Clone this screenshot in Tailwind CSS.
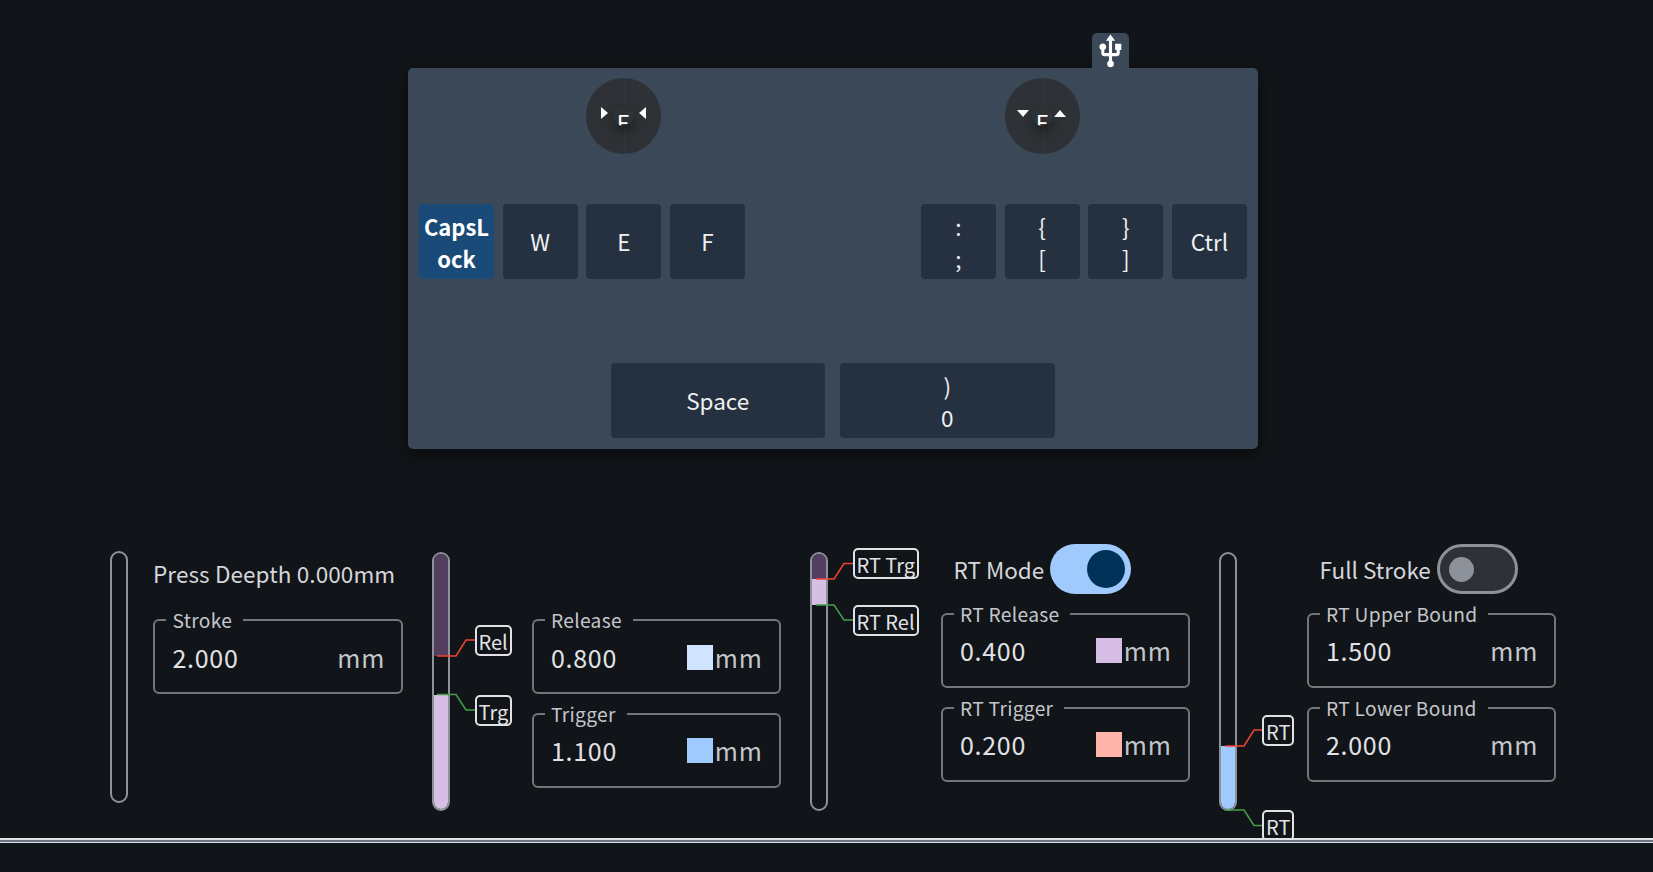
<!DOCTYPE html>
<html lang="en">
<head>
  <meta charset="UTF-8" />
  <meta name="viewport" content="width=device-width, initial-scale=1.0" />
  <title>Keyboard Settings</title>
  <script src="https://cdn.jsdelivr.net/npm/@tailwindcss/browser@4"></script>
</head>
<body class="bg-[#111418] h-[872px] overflow-hidden font-['Noto_Sans_CJK_SC',sans-serif] text-[#e2e2e6]">

  <!-- Keyboard -->
  <div class="relative w-[850px] h-[381px] mt-[68px] ml-[408px] bg-[#3b4858] rounded-[5px] shadow-[0_4px_16px_rgba(0,0,0,0.45)] pt-[10px] text-[22.5px] text-[#f0f0f3]">
    <div class="absolute -top-[35px] right-[129px] w-[37px] h-[36px] bg-[#3b4858] rounded-t-[5px]">
      <svg viewBox="0 0 24 24" class="w-[37px] h-[37px] fill-white"><path d="M15,7V11H16V13H13V5H15L12,1L9,5H11V13H8V10.93C8.7,10.56 9.2,9.85 9.2,9C9.2,7.78 8.21,6.8 7,6.8C5.78,6.8 4.8,7.78 4.8,9C4.8,9.85 5.3,10.56 6,10.93V13A2,2 0 0,0 8,15H11V18.05C10.29,18.41 9.8,19.15 9.8,20A2.2,2.2 0 0,0 12,22.2A2.2,2.2 0 0,0 14.2,20C14.2,19.15 13.71,18.41 13,18.05V15H16A2,2 0 0,0 18,13V11H19V7H15Z"/></svg>
    </div>

    <!-- Joysticks -->
    <div class="flex h-[76px] pl-[178px] gap-[344px]">
      <div class="relative w-[75px] h-[76px] rounded-full bg-[#2e3135]">
        <div class="absolute left-1/2 top-0 w-px h-full bg-[#34373b]"></div>
        <div class="absolute left-[15px] top-[29px] w-0 h-0 border-y-[6.5px] border-y-transparent border-l-[7px] border-l-white"></div>
        <div class="absolute left-[53px] top-[29px] w-0 h-0 border-y-[6.5px] border-y-transparent border-r-[7px] border-r-white"></div>
        <div class="absolute left-[27px] top-[28px] w-[21px] h-[20px] rounded-full bg-[#2e3135] shadow-[0_6px_12px_rgba(0,0,0,0.35)] overflow-hidden text-center text-[22.5px] leading-[33px] text-white">E</div>
      </div>
      <div class="relative w-[75px] h-[76px] rounded-full bg-[#2e3135]">
        <div class="absolute left-1/2 top-0 w-px h-full bg-[#34373b]"></div>
        <div class="absolute left-[12px] top-[32px] w-0 h-0 border-x-[6.5px] border-x-transparent border-t-[7px] border-t-white"></div>
        <div class="absolute left-[49px] top-[32px] w-0 h-0 border-x-[6.5px] border-x-transparent border-b-[7px] border-b-white"></div>
        <div class="absolute left-[27px] top-[28px] w-[21px] h-[20px] rounded-full bg-[#2e3135] shadow-[0_6px_12px_rgba(0,0,0,0.35)] overflow-hidden text-center text-[22.5px] leading-[33px] text-white">E</div>
      </div>
    </div>

    <!-- Main keys -->
    <div class="flex mt-[50px] pl-[11px] pr-[11px] justify-between">
      <div class="flex gap-[8.7px]">
        <div class="w-[75px] h-[75px] rounded-[4px] bg-[#1a4b78] flex items-center justify-center text-center text-[22px] font-bold break-all leading-[32px] text-white">CapsLock</div>
        <div class="w-[75px] h-[75px] rounded-[4px] bg-[#253040] flex items-center justify-center">W</div>
        <div class="w-[75px] h-[75px] rounded-[4px] bg-[#253040] flex items-center justify-center">E</div>
        <div class="w-[75px] h-[75px] rounded-[4px] bg-[#253040] flex items-center justify-center">F</div>
      </div>
      <div class="flex gap-[8.7px]">
        <div class="w-[75px] h-[75px] rounded-[4px] bg-[#253040] flex flex-col items-center justify-center leading-[32px]"><span>:</span><span>;</span></div>
        <div class="w-[75px] h-[75px] rounded-[4px] bg-[#253040] flex flex-col items-center justify-center leading-[32px]"><span>{</span><span>[</span></div>
        <div class="w-[75px] h-[75px] rounded-[4px] bg-[#253040] flex flex-col items-center justify-center leading-[32px]"><span>}</span><span>]</span></div>
        <div class="w-[75px] h-[75px] rounded-[4px] bg-[#253040] flex items-center justify-center">Ctrl</div>
      </div>
    </div>

    <!-- Thumb keys -->
    <div class="flex mt-[84px] pl-[202.5px] gap-[15px]">
      <div class="w-[214.5px] h-[75px] rounded-[4px] bg-[#253040] flex items-center justify-center">Space</div>
      <div class="w-[214.5px] h-[75px] rounded-[4px] bg-[#253040] flex flex-col items-center justify-center leading-[32px]"><span>)</span><span>0</span></div>
    </div>
  </div>

  <!-- Settings -->
  <div class="flex items-start h-[294px] mt-[95px] pl-[109.5px]">

    <!-- Press depth -->
    <div class="w-[18px] h-[252px] mt-[7px] rounded-full border-2 border-[#8d9199]"></div>
    <div class="w-[249.5px] ml-[25.5px]">
      <div class="h-[30px] mt-[14px] mb-[31px] text-[22.5px] leading-[30px] tracking-[0.1px] whitespace-nowrap text-[#d5d6da]">Press Deepth 0.000mm</div>
      <div class="relative h-[75px] rounded-[6px] border-2 border-[#73767b] flex items-center justify-between pl-[17.5px] pr-[15.5px] pt-[2px] text-[25px] tracking-[0.7px]">
        <span class="absolute -top-[13px] left-[11px] bg-[#111418] pl-[6.5px] pr-[11px] text-[19.2px] leading-[24px] tracking-[0.3px] text-[#c4c6cc]">Stroke</span>
        <span>2.000</span><span class="text-[#c4c6cc]">mm</span>
      </div>
    </div>

    <!-- Release / trigger -->
    <div class="relative w-[100px] h-[270px] ml-[29px] mt-[8px]">
      <div class="w-[18px] h-[259px] rounded-full border-2 border-[#8d9199] overflow-hidden flex flex-col">
        <div class="h-[102px] bg-[#523f5f]"></div>
        <div class="h-[39px]"></div>
        <div class="flex-1 bg-[#d6bee4]"></div>
      </div>
      <svg class="absolute left-0 top-0 w-[100px] h-[180px] fill-none stroke-[1.5]" viewBox="0 0 100 180">
        <polyline class="stroke-[#f44336]" points="5,104 24,104 34,88 43,88" />
        <polyline class="stroke-[#43a047]" points="5,142.5 24,142.5 34,158 43,158" />
      </svg>
      <div class="absolute left-[43px] top-[73px] px-[2px] h-[31px] rounded-[5px] border-2 border-[#e2e2e6] bg-[#111418] text-[20px] leading-[29px]">Rel</div>
      <div class="absolute left-[43px] top-[143px] px-[2px] h-[31px] rounded-[5px] border-2 border-[#e2e2e6] bg-[#111418] text-[20px] leading-[29px]">Trg</div>
    </div>
    <div class="w-[249.5px] flex flex-col gap-[19px] mt-[75px]">
      <div class="relative h-[75px] rounded-[6px] border-2 border-[#73767b] flex items-center justify-between pl-[17.5px] pr-[16.5px] pt-[2px] text-[25px] tracking-[0.7px]">
        <span class="absolute -top-[13px] left-[11px] bg-[#111418] pl-[6.5px] pr-[11px] text-[19.2px] leading-[24px] tracking-[0.3px] text-[#c4c6cc]">Release</span>
        <span>0.800</span>
        <span class="flex items-center gap-[2px] text-[#c4c6cc]"><span class="w-[25.5px] h-[25.5px] bg-[#d0e4ff]"></span>mm</span>
      </div>
      <div class="relative h-[75px] rounded-[6px] border-2 border-[#73767b] flex items-center justify-between pl-[17.5px] pr-[16.5px] text-[25px] tracking-[0.7px]">
        <span class="absolute -top-[13px] left-[11px] bg-[#111418] pl-[6.5px] pr-[11px] text-[19.2px] leading-[24px] tracking-[0.3px] text-[#c4c6cc]">Trigger</span>
        <span>1.100</span>
        <span class="flex items-center gap-[2px] text-[#c4c6cc]"><span class="w-[25.5px] h-[25.5px] bg-[#a0cafd]"></span>mm</span>
      </div>
    </div>

    <!-- Rapid trigger travel -->
    <div class="relative w-[131px] h-[270px] ml-[28.5px] mt-[8px]">
      <div class="w-[18px] h-[259px] rounded-full border-2 border-[#8d9199] overflow-hidden flex flex-col">
        <div class="h-[25px] bg-[#523f5f]"></div>
        <div class="h-[26px] bg-[#d6bee4]"></div>
      </div>
      <svg class="absolute left-0 top-0 w-[60px] h-[90px] fill-none stroke-[1.5]" viewBox="0 0 60 90">
        <polyline class="stroke-[#f44336]" points="6,27 24,27 34,11.5 43,11.5" />
        <polyline class="stroke-[#43a047]" points="6,53 24,53 34,68 43,68" />
      </svg>
      <div class="absolute left-[43px] -top-[4px] px-[2px] h-[31px] rounded-[5px] border-2 border-[#e2e2e6] bg-[#111418] text-[20px] leading-[29px] whitespace-nowrap">RT Trg</div>
      <div class="absolute left-[43px] top-[53px] px-[2px] h-[31px] rounded-[5px] border-2 border-[#e2e2e6] bg-[#111418] text-[20px] leading-[29px] whitespace-nowrap">RT Rel</div>
    </div>
    <div class="w-[249.5px]">
      <div class="flex items-center h-[50px] pl-[13px] mb-[19px] gap-[6px] text-[22.5px] text-[#d5d6da]">
        <span class="pt-[2px]">RT Mode</span>
        <div class="w-[81px] h-[50px] rounded-full bg-[#a0cafd] flex items-center justify-end pr-[6px]">
          <div class="w-[38px] h-[38px] rounded-full bg-[#003258]"></div>
        </div>
      </div>
      <div class="flex flex-col gap-[19px]">
        <div class="relative h-[75px] rounded-[6px] border-2 border-[#73767b] flex items-center justify-between pl-[17.5px] pr-[16.5px] text-[25px] tracking-[0.7px]">
          <span class="absolute -top-[13px] left-[11px] bg-[#111418] pl-[6.5px] pr-[11px] text-[19.2px] leading-[24px] tracking-[0.3px] text-[#c4c6cc]">RT Release</span>
          <span>0.400</span>
          <span class="flex items-center gap-[2px] text-[#c4c6cc]"><span class="w-[25.5px] h-[25.5px] bg-[#d6bee4]"></span>mm</span>
        </div>
        <div class="relative h-[75px] rounded-[6px] border-2 border-[#73767b] flex items-center justify-between pl-[17.5px] pr-[16.5px] text-[25px] tracking-[0.7px]">
          <span class="absolute -top-[13px] left-[11px] bg-[#111418] pl-[6.5px] pr-[11px] text-[19.2px] leading-[24px] tracking-[0.3px] text-[#c4c6cc]">RT Trigger</span>
          <span>0.200</span>
          <span class="flex items-center gap-[2px] text-[#c4c6cc]"><span class="w-[25.5px] h-[25.5px] bg-[#ffb4ab]"></span>mm</span>
        </div>
      </div>
    </div>

    <!-- Rapid trigger bounds -->
    <div class="relative w-[87.5px] h-[290px] ml-[29px] mt-[8px]">
      <div class="w-[18px] h-[259px] rounded-full border-2 border-[#8d9199] overflow-hidden flex flex-col">
        <div class="h-[192px]"></div>
        <div class="flex-1 bg-[#a0cafd]"></div>
      </div>
      <svg class="absolute left-0 top-0 w-[50px] h-[290px] fill-none stroke-[1.5]" viewBox="0 0 50 290">
        <polyline class="stroke-[#f44336]" points="6,194 25,194 35,178 43,178" />
        <polyline class="stroke-[#43a047]" points="6,258 25,258 35,273.5 43,273.5" />
      </svg>
      <div class="absolute left-[43px] top-[163px] px-[2px] h-[31px] rounded-[5px] border-2 border-[#e2e2e6] bg-[#111418] text-[20px] leading-[29px]">RT</div>
      <div class="absolute left-[43px] top-[258px] px-[2px] h-[31px] rounded-[5px] border-2 border-[#e2e2e6] bg-[#111418] text-[20px] leading-[29px]">RT</div>
    </div>
    <div class="w-[249.5px]">
      <div class="flex items-center h-[50px] pl-[13px] mb-[19px] gap-[6px] text-[22.5px] text-[#d5d6da]">
        <span class="pt-[2px]">Full Stroke</span>
        <div class="w-[81px] h-[50px] rounded-full bg-[#2e3135] border-[3px] border-[#8d9199] flex items-center pl-[9px]">
          <div class="w-[25px] h-[25px] rounded-full bg-[#8d9199]"></div>
        </div>
      </div>
      <div class="flex flex-col gap-[19px]">
        <div class="relative h-[75px] rounded-[6px] border-2 border-[#73767b] flex items-center justify-between pl-[17.5px] pr-[16px] text-[25px] tracking-[0.7px]">
          <span class="absolute -top-[13px] left-[11px] bg-[#111418] pl-[6.5px] pr-[11px] text-[19.2px] leading-[24px] tracking-[0.3px] text-[#c4c6cc]">RT Upper Bound</span>
          <span>1.500</span><span class="text-[#c4c6cc]">mm</span>
        </div>
        <div class="relative h-[75px] rounded-[6px] border-2 border-[#73767b] flex items-center justify-between pl-[17.5px] pr-[16px] text-[25px] tracking-[0.7px]">
          <span class="absolute -top-[13px] left-[11px] bg-[#111418] pl-[6.5px] pr-[11px] text-[19.2px] leading-[24px] tracking-[0.3px] text-[#c4c6cc]">RT Lower Bound</span>
          <span>2.000</span><span class="text-[#c4c6cc]">mm</span>
        </div>
      </div>
    </div>
  </div>

  <!-- Bottom rule -->
  <div class="relative">
    <div class="h-[1.5px] bg-[#e2e2e6]"></div>
    <div class="h-[2px] bg-[#73767b]"></div>
    <div class="h-[1.5px] bg-[#d0e4ff]"></div>
  </div>
</body>
</html>
